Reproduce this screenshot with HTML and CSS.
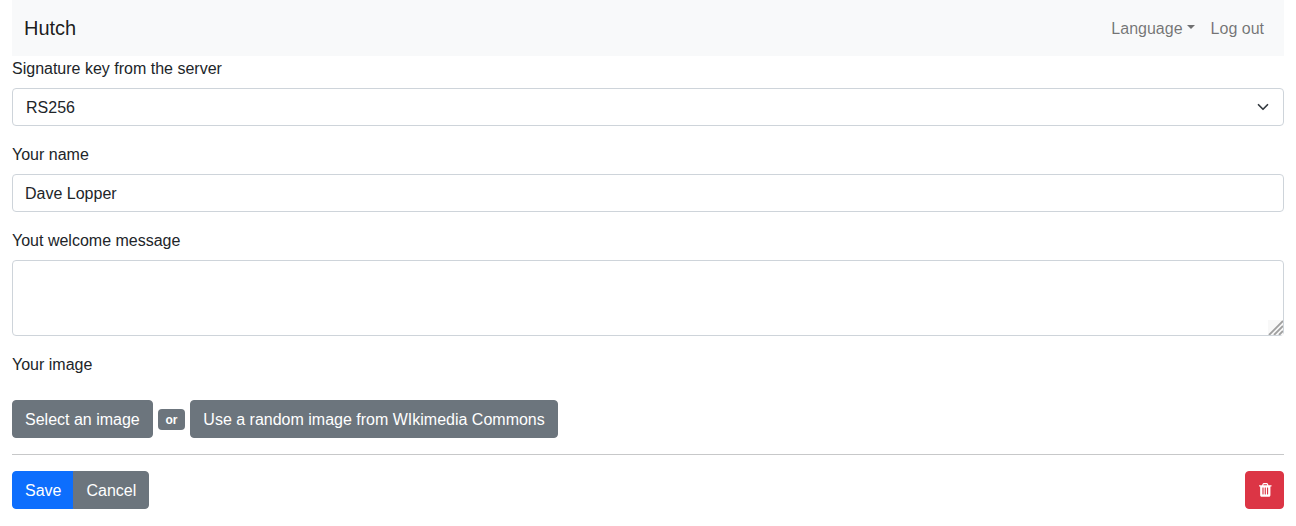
FILE: index.html
```html
<!DOCTYPE html>
<html lang="en">
<head>
<meta charset="utf-8">
<title>Hutch</title>
<link rel="stylesheet" href="styles.css">
</head>
<body>
<div class="container">
  <nav class="navbar">
    <a class="brand">Hutch</a>
    <div class="nav-links">
      <a class="nav-link dropdown">Language</a>
      <a class="nav-link">Log out</a>
    </div>
  </nav>
  <form>
    <div class="group">
      <label for="key">Signature key from the server</label>
      <div class="control select" id="key"><span>RS256</span>
        <svg class="chevron" viewBox="0 0 16 16"><path d="M2 5l6 6 6-6"/></svg>
      </div>
    </div>
    <div class="group">
      <label for="name">Your name</label>
      <input class="control" id="name" type="text" value="Dave Lopper">
    </div>
    <div class="group">
      <label for="message">Yout welcome message</label>
      <div class="message-wrap">
        <textarea class="control message" id="message"></textarea>
        <svg class="grip" viewBox="0 0 15 15"><path d="M1 15L15 1M6 15l9-9M11 15l4-4"/></svg>
      </div>
    </div>
    <div class="group image-group">
      <label>Your image</label>
      <div class="image-actions">
        <button type="button" class="btn secondary">Select an image</button>
        <span class="badge">or</span>
        <button type="button" class="btn secondary">Use a random image from WIkimedia Commons</button>
      </div>
    </div>
    <hr>
    <div class="footer">
      <div class="btn-group">
        <button type="button" class="btn primary">Save</button>
        <button type="button" class="btn secondary">Cancel</button>
      </div>
      <button type="button" class="btn danger" aria-label="Delete">
        <svg class="trash" viewBox="192 128 1408 1536"><path d="M704 1376v-704q0-14-9-23t-23-9h-64q-14 0-23 9t-9 23v704q0 14 9 23t23 9h64q14 0 23-9t9-23zm256 0v-704q0-14-9-23t-23-9h-64q-14 0-23 9t-9 23v704q0 14 9 23t23 9h64q14 0 23-9t9-23zm256 0v-704q0-14-9-23t-23-9h-64q-14 0-23 9t-9 23v704q0 14 9 23t23 9h64q14 0 23-9t9-23zm-544-992h448l-48-117q-7-9-17-11h-317q-10 2-17 11zm928 32v64q0 14-9 23t-23 9h-96v948q0 83-47 143.500t-113 60.500h-832q-66 0-113-58.500t-47-141.500v-952h-96q-14 0-23-9t-9-23v-64q0-14 9-23t23-9h309l70-167q15-37 54-63t79-26h320q40 0 79 26t54 63l70 167h309q14 0 23 9t9 23z"/></svg>
      </button>
    </div>
  </form>
</div>
</body>
</html>
```
FILE: styles.css
```css
* { box-sizing: border-box; }
body {
  margin: 0;
  font: 16px/24px "Liberation Sans", Arial, sans-serif;
  color: #212529;
  background: #fff;
}
.container { padding: 0 12px; }
.navbar {
  display: flex;
  align-items: center;
  justify-content: space-between;
  height: 56px;
  padding: 0 12px;
  background: #f8f9fa;
}
.brand { font-size: 20px; line-height: 30px; color: rgba(0, 0, 0, .9); }
.nav-links { display: flex; }
.nav-link { padding: 9px 8px 7px; color: rgba(0, 0, 0, .55); }
.dropdown::after {
  content: "";
  display: inline-block;
  margin-left: 4.08px;
  vertical-align: 5.08px;
  border-top: 4.8px solid;
  border-right: 4.8px solid transparent;
  border-left: 4.8px solid transparent;
}
.group { margin-bottom: 16px; }
label { display: block; padding-top: 1px; margin-bottom: 7px; }
.control {
  display: block;
  width: 100%;
  height: 38px;
  padding: 7px 12px 5px;
  border: 1px solid #ced4da;
  border-radius: 4px;
  font: inherit;
  color: inherit;
  background: #fff;
}
.select {
  display: flex;
  align-items: center;
  justify-content: space-between;
  padding: 7px 12px 5px 13px;
}
.chevron {
  width: 16px;
  height: 12px;
  margin-bottom: 2px;
  fill: none;
  stroke: #343a40;
  stroke-width: 2.3;
  stroke-linecap: round;
  stroke-linejoin: round;
}
.message-wrap { position: relative; }
.message { height: 76px; resize: none; }
.grip {
  position: absolute;
  right: 1px;
  bottom: 1px;
  width: 15px;
  height: 15px;
  background: #f8f8f8;
  fill: none;
  stroke: #a0a0a0;
  stroke-width: 1.8;
}
.image-group label { margin-bottom: 23px; }
.image-actions { display: flex; align-items: center; gap: 5px; }
.btn {
  padding: 7px 12px 5px;
  border: 1px solid;
  border-radius: 4px;
  font: inherit;
  color: #fff;
}
.primary { background: #0d6efd; border-color: #0d6efd; }
.secondary { background: #6c757d; border-color: #6c757d; }
.danger { display: flex; align-items: center; height: 38px; padding: 6px 11.5px 6px 12.5px; background: #dc3545; border-color: #dc3545; }
.badge {
  height: 21px;
  margin-top: 1px;
  padding: 5px 7.8px 4px;
  border-radius: 4px;
  background: #6c757d;
  color: #fff;
  font-size: 12px;
  font-weight: 700;
  line-height: 12px;
}
hr { height: 1px; margin: 16px 0; border: 0; background: #212529; opacity: .25; }
.footer { display: flex; justify-content: space-between; }
.btn-group { display: flex; }
.btn-group .primary { border-radius: 4px 0 0 4px; }
.btn-group .secondary { margin-left: -1px; border-radius: 0 4px 4px 0; }
.trash { width: 12.57px; height: 13.71px; fill: #fff; }
```
